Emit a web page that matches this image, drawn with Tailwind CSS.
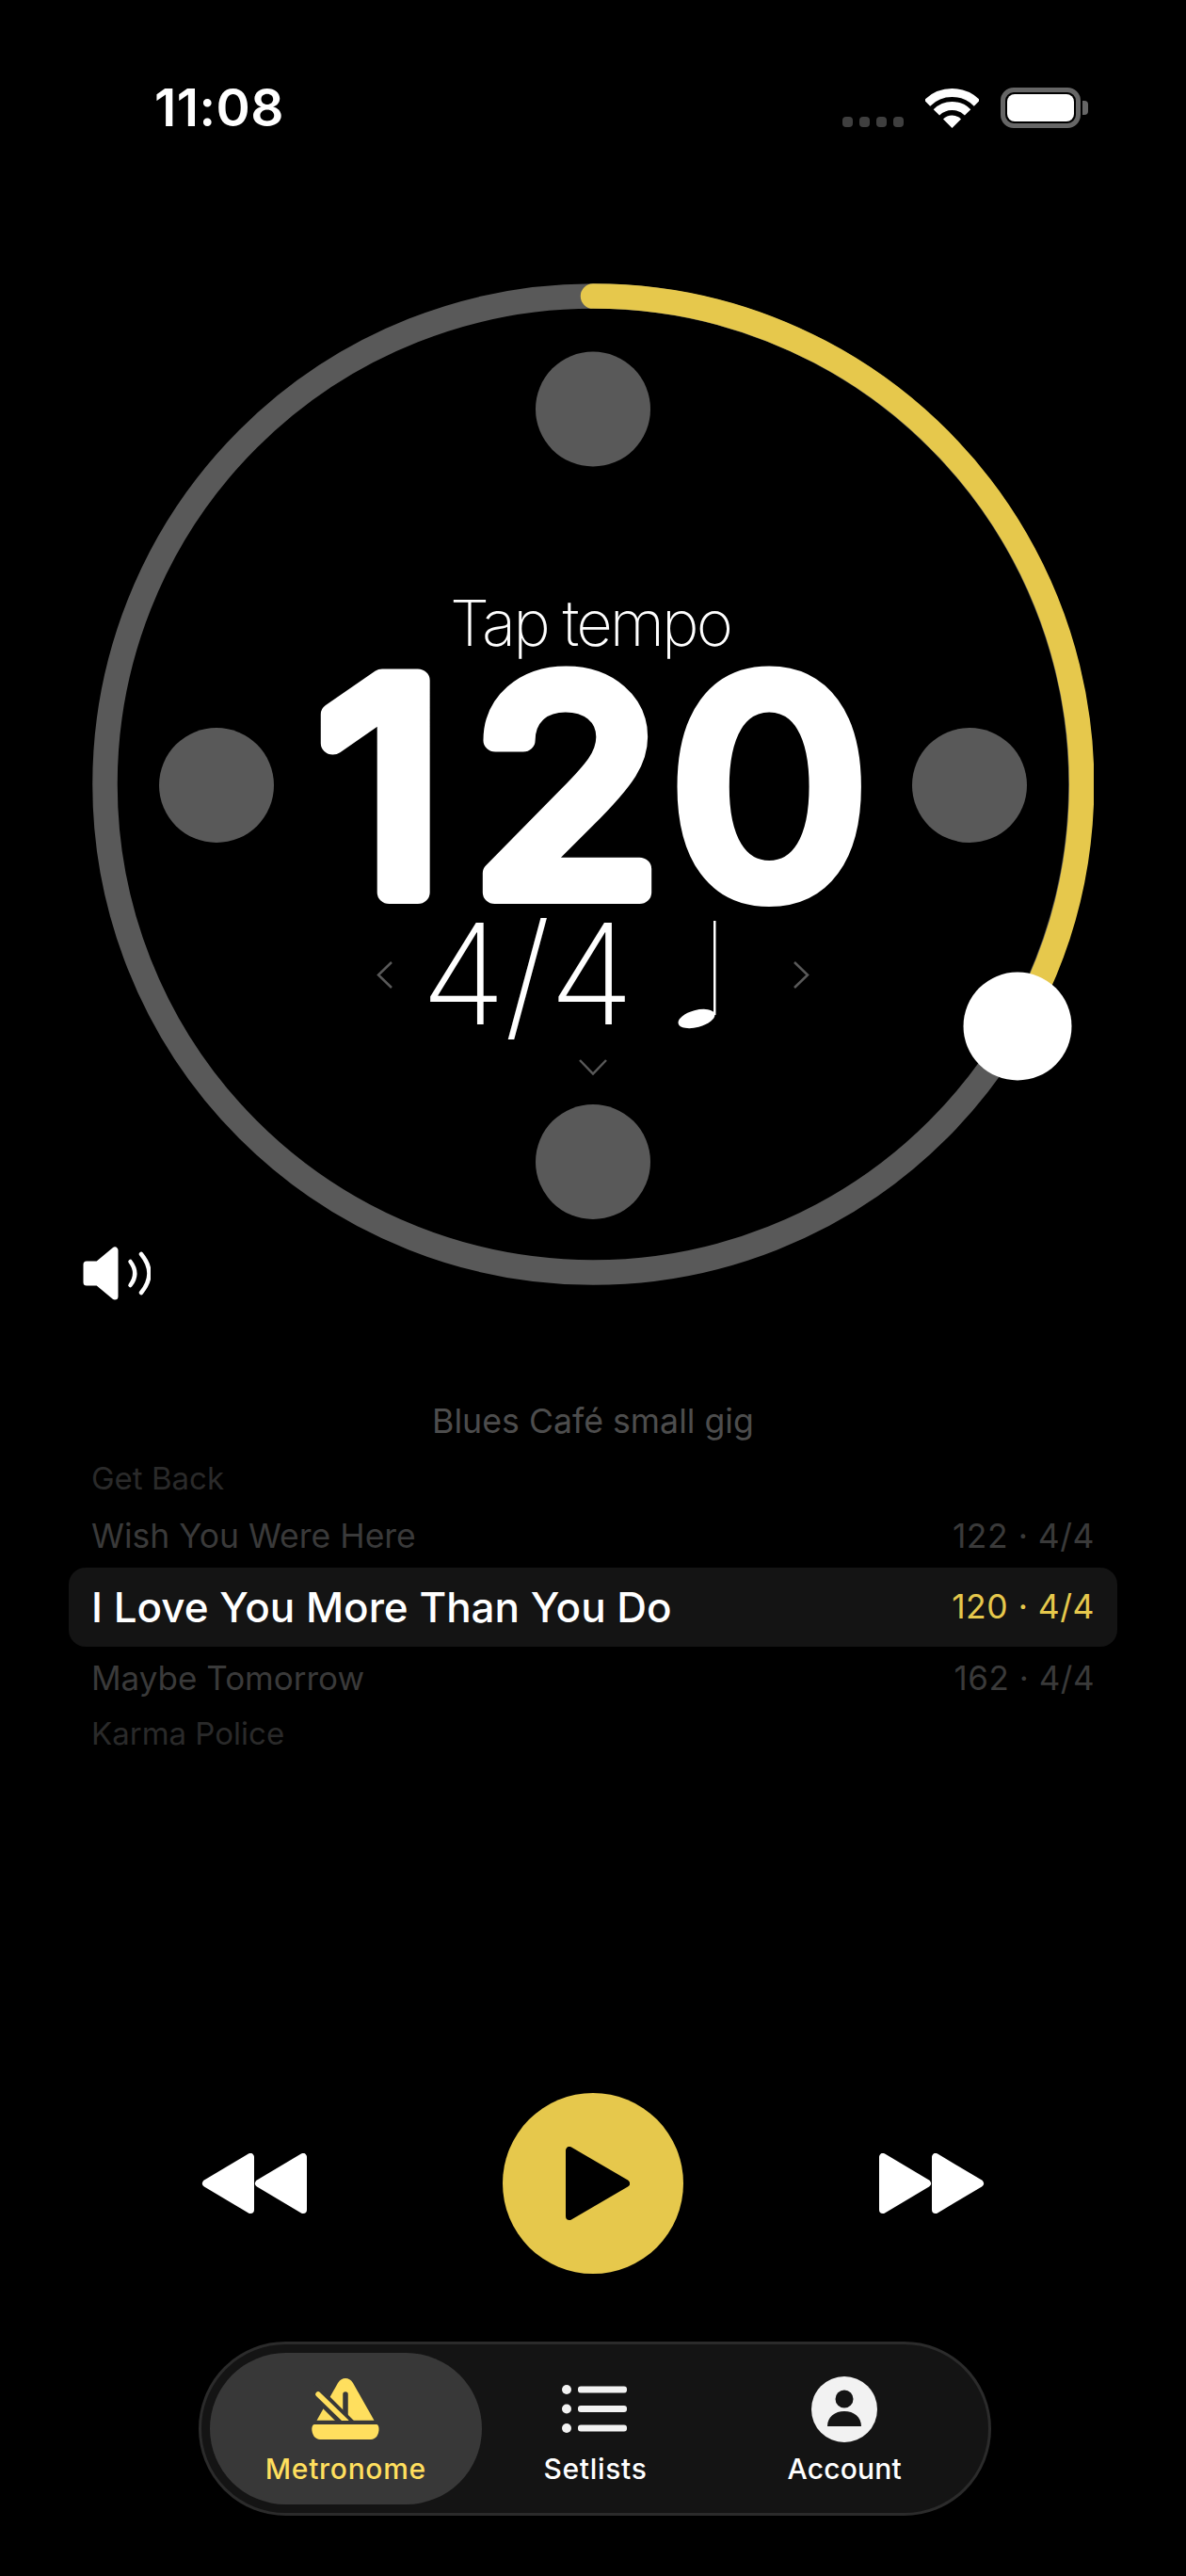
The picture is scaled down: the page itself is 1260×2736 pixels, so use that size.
<!DOCTYPE html>
<html lang="en">
<head>
    <meta charset="UTF-8">
    <meta name="viewport" content="width=device-width, initial-scale=1.0">
    <title>Metronome</title>
    <script src="https://cdn.jsdelivr.net/npm/@tailwindcss/browser@4"></script>
</head>
<body class="bg-black">
    <div class="w-[1260px] h-[2736px] bg-black text-white font-['Inter',sans-serif] flex flex-col overflow-hidden">

        <!-- status bar -->
        <div class="flex justify-between items-end h-[43px] mt-[93px] pl-[164px] pr-[104px]">
            <span class="text-[55px] leading-[43px] font-semibold tracking-[0.5px]">11:08</span>
            <div class="flex items-end">
                <div class="flex gap-[7px] mb-[1px]">
                    <span class="w-[11px] h-[11px] rounded-[4px] bg-[#3f3f3f]"></span>
                    <span class="w-[11px] h-[11px] rounded-[4px] bg-[#3f3f3f]"></span>
                    <span class="w-[11px] h-[11px] rounded-[4px] bg-[#3f3f3f]"></span>
                    <span class="w-[11px] h-[11px] rounded-[4px] bg-[#3f3f3f]"></span>
                </div>
                <svg class="ml-[23px]" width="57" height="42" viewBox="0 0 57 42" fill="none">
                    <path d="M2 15.5A37.5 37.5 0 0 1 55 15.5" stroke="#fff" stroke-width="9"/>
                    <path d="M11.9 25.4A23.5 23.5 0 0 1 45.1 25.4" stroke="#fff" stroke-width="9"/>
                    <path d="M28.5 42L19 32.5A13.5 13.5 0 0 1 38 32.5Z" fill="#fff"/>
                </svg>
                <div class="ml-[23px] w-[85px] h-[43px] rounded-[14px] border-[5px] border-[#666] p-[2px]">
                    <div class="w-full h-full rounded-[8px] bg-white"></div>
                </div>
                <span class="ml-[2px] mb-[14px] w-[6px] h-[15px] rounded-r-[4px] bg-[#666]"></span>
            </div>
        </div>

        <!-- dial -->
        <div class="relative w-[1064px] h-[1064px] mt-[165px] ml-[98px] shrink-0">
            <svg class="absolute inset-0" width="1064" height="1064" viewBox="0 0 1064 1064" fill="none">
                <circle cx="532" cy="532" r="518.5" stroke="#595959" stroke-width="26.5"/>
                <path d="M532 13.5A518.5 518.5 0 0 1 983 789" stroke="#e6c84c" stroke-width="26.5" stroke-linecap="round"/>
                <circle cx="532" cy="133.5" r="61" fill="#595959"/>
                <circle cx="132" cy="533" r="61" fill="#595959"/>
                <circle cx="932" cy="533" r="61" fill="#595959"/>
                <circle cx="532" cy="933" r="61" fill="#595959"/>
                <circle cx="983" cy="789" r="57.5" fill="#fff"/>
            </svg>
            <div class="relative flex flex-col items-center pt-[321px]">
                <div class="h-[80px] leading-[80px] text-[67px] font-extralight tracking-[-3px] mr-[6px]">Tap tempo</div>
                <!-- stroked text gives the rounded digit ends -->
                <svg class="w-[800px] h-[273px] overflow-visible" viewBox="0 0 800 273" fill="#fff" stroke="#fff" stroke-width="24" stroke-linejoin="round">
                    <text transform="scale(1.07 1)" y="246" x="101 253 451" font-size="310" font-weight="400">120</text>
                </svg>
                <div class="flex items-center w-[460px] h-[120px]">
                    <svg width="17" height="29" viewBox="0 0 17 29" fill="none"><path d="M16 1L2 14.5L16 28" stroke="#595959" stroke-width="2.5"/></svg>
                    <span class="ml-[30px] w-[210px] shrink-0 text-[148px] leading-[120px] font-extralight tracking-[-2px]">4/4</span>
                    <svg class="ml-[62px]" width="42" height="118" viewBox="0 0 42 118" fill="#fff">
                        <rect x="39" y="2" width="2.5" height="100"/>
                        <ellipse cx="21" cy="106" rx="20" ry="9" transform="rotate(-15 21 106)"/>
                    </svg>
                    <svg class="ml-auto" width="17" height="29" viewBox="0 0 17 29" fill="none"><path d="M1 1L15 14.5L1 28" stroke="#595959" stroke-width="2.5"/></svg>
                </div>
                <svg class="mt-[30px]" width="30" height="17" viewBox="0 0 30 17" fill="none"><path d="M1 1L15 15.5L29 1" stroke="#595959" stroke-width="2.5"/></svg>
            </div>
        </div>

        <!-- volume -->
        <svg class="-mt-[41px] ml-[88px] shrink-0" width="72" height="57" viewBox="0 0 72 57" fill="none">
            <path d="M4 19H16L34 4V53L16 38H4Z" fill="#fff" stroke="#fff" stroke-width="7" stroke-linejoin="round"/>
            <path d="M50.5 16Q60 28.5 50.5 41" stroke="#fff" stroke-width="4.5" stroke-linecap="round"/>
            <path d="M62 8Q79 28.5 62 49" stroke="#fff" stroke-width="4.5" stroke-linecap="round"/>
        </svg>

        <!-- setlist -->
        <div class="mt-[103px] flex flex-col">
            <div class="h-[51px] flex items-center justify-center text-[35.7px] text-[#4d4d4d]">Blues Café small gig</div>
            <div class="h-[50px] mt-[11px] px-[97px] flex items-center text-[33px] text-[#2a2a2a]">Get Back</div>
            <div class="h-[51px] mt-[10px] px-[97px] flex items-center justify-between text-[35.5px] text-[#3a3a3a]">
                <span>Wish You Were Here</span>
                <span class="tracking-[0.5px]">122 · 4/4</span>
            </div>
            <div class="h-[84px] mt-[8px] mx-[73px] px-[24px] rounded-[18px] bg-[#141414] flex items-center justify-between">
                <span class="text-[44px] font-medium">I Love You More Than You Do</span>
                <span class="text-[35.5px] tracking-[0.5px] text-[#e6c84c]">120 · 4/4</span>
            </div>
            <div class="h-[51px] mt-[8px] px-[97px] flex items-center justify-between text-[35px] text-[#3a3a3a]">
                <span>Maybe Tomorrow</span>
                <span class="tracking-[0.5px]">162 · 4/4</span>
            </div>
            <div class="h-[50px] mt-[9px] px-[97px] flex items-center text-[33px] text-[#2a2a2a]">Karma Police</div>
        </div>

        <!-- transport -->
        <div class="mt-auto px-[214px] flex items-center justify-between">
            <svg width="112" height="64" viewBox="0 0 112 64" fill="#fff" stroke="#fff" stroke-width="8" stroke-linejoin="round">
                <path d="M5 32L52 4V60Z"/>
                <path d="M61 32L108 4V60Z"/>
            </svg>
            <div class="w-[192px] h-[192px] rounded-full bg-[#e6c84c] flex items-center justify-center">
                <svg class="ml-[10px]" width="68" height="78" viewBox="0 0 68 78" fill="#000" stroke="#000" stroke-width="8" stroke-linejoin="round">
                    <path d="M4 4V74L64 39Z"/>
                </svg>
            </div>
            <svg width="112" height="64" viewBox="0 0 112 64" fill="#fff" stroke="#fff" stroke-width="8" stroke-linejoin="round">
                <path d="M4 4V60L51 32Z"/>
                <path d="M60 4V60L107 32Z"/>
            </svg>
        </div>

        <!-- tab bar -->
        <div class="mt-[72px] mb-[64px] ml-[211px] w-[842px] h-[185px] rounded-full border-[3px] border-[#2b2b2b] bg-[#141414] p-[9px] flex">
            <div class="w-[289px] rounded-full bg-[#383838] flex flex-col items-center pt-[27px]">
                <svg width="72" height="65" viewBox="0 0 72 65">
                    <path d="M28 5C30 1.5 33 0 36 0C39 0 42 1.5 44 5L66.5 44.7H5.5Z" fill="#ffdf5e"/>
                    <path d="M0 10L42 52" stroke="#383838" stroke-width="14"/>
                    <path d="M36 17V40" stroke="#383838" stroke-width="5.5" stroke-linecap="round"/>
                    <path d="M7 17L37 46" stroke="#ffdf5e" stroke-width="5.5" stroke-linecap="round"/>
                    <path d="M0 45H72V49H0Z" fill="#383838"/>
                    <path d="M3 49H69Q71 49 71.5 53C72 60 68 65 63 65H9C4 65 0 60 .3 53Q1 49 3 49Z" fill="#ffdf5e"/>
                </svg>
                <span class="mt-[13px] text-[30px] leading-[36px] font-medium tracking-[0.7px] text-[#ffdf5e]">Metronome</span>
            </div>
            <div class="w-[242px] flex flex-col items-center pt-[27px]">
                <svg width="70" height="65" viewBox="0 0 70 65" fill="#f2f2f2">
                    <circle cx="5" cy="12" r="5"/><rect x="17" y="8.5" width="52" height="7" rx="3"/>
                    <circle cx="5" cy="32.5" r="5"/><rect x="17" y="29" width="52" height="7" rx="3"/>
                    <circle cx="5" cy="53" r="5"/><rect x="17" y="49.5" width="52" height="7" rx="3"/>
                </svg>
                <span class="mt-[13px] text-[30px] leading-[36px] font-medium tracking-[0.7px]">Setlists</span>
            </div>
            <div class="w-[288px] flex flex-col items-center pt-[25px]">
                <svg width="70" height="70" viewBox="0 0 70 70">
                    <circle cx="35" cy="35" r="35" fill="#f2f2f2"/>
                    <circle cx="35" cy="24" r="9.5" fill="#141414"/>
                    <path d="M17 53C17 43 25 37 35 37C45 37 53 43 53 53Z" fill="#141414"/>
                </svg>
                <span class="mt-[10px] text-[30px] leading-[36px] font-medium tracking-[0.2px]">Account</span>
            </div>
        </div>
    </div>
</body>
</html>
